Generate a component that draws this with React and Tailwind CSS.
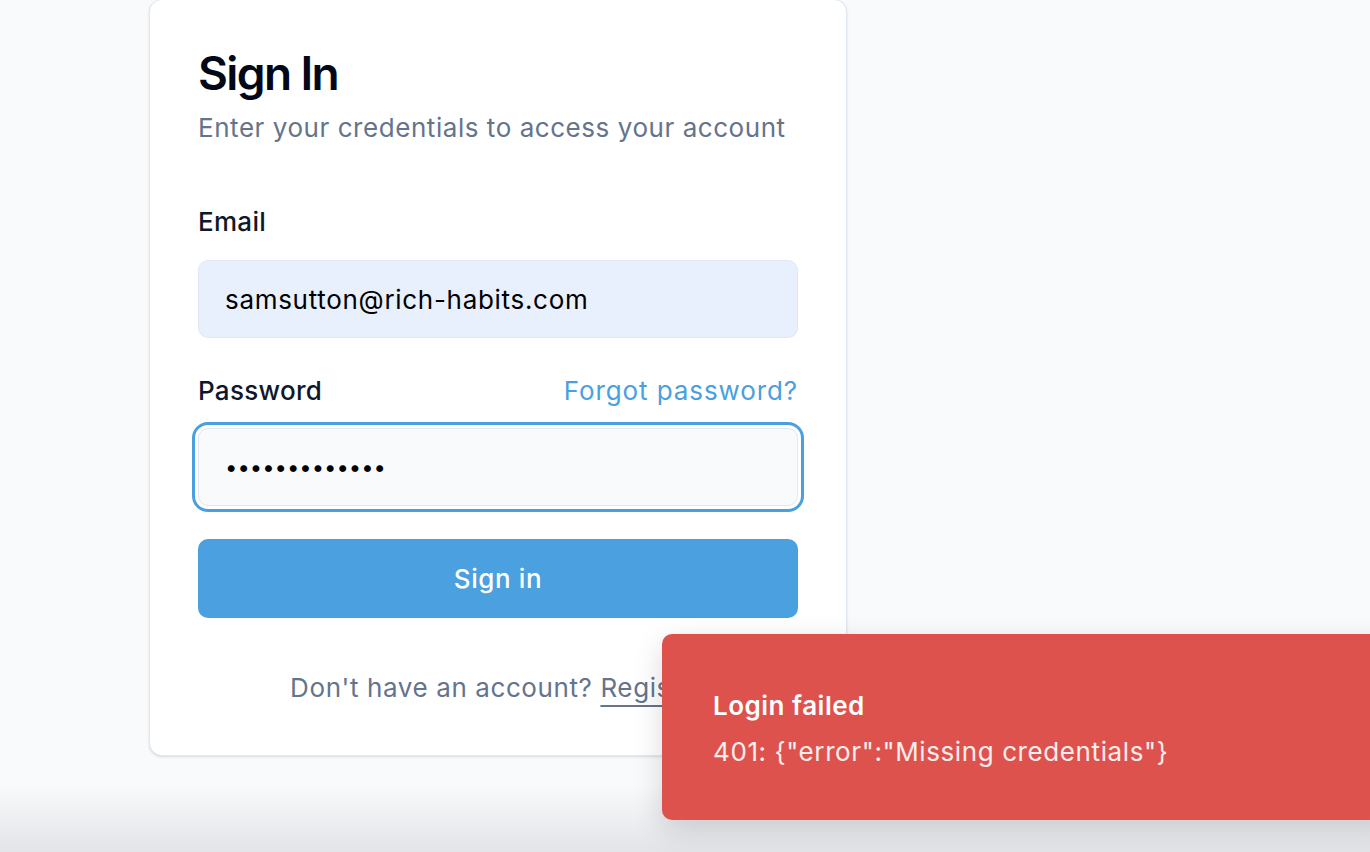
export default function App() {
    return (
        <div
            className="relative h-screen overflow-hidden bg-[linear-gradient(to_bottom,#f8fafc_0px,#f8fafc_785px,#e3e4e7_852px)]"
            style={{ fontFamily: 'Inter, "Noto Sans", sans-serif' }}
        >
            {/* Login card */}
            <div className="ml-[149px] -mt-[1px] w-[698px] rounded-[13px] border border-[#e2e8f0] bg-white px-[48px] pt-[49px] pb-[49px] shadow-sm">
                <h1 className="text-[46px] font-semibold leading-[48px] tracking-[-0.035em] text-[#020817]">Sign In</h1>
                <p className="mt-[13px] text-[26px] leading-[36px] tracking-[0.55px] text-[#64748b]">Enter your credentials to access your account</p>

                <form className="mt-[58px]" onSubmit={(e) => e.preventDefault()}>
                    <label className="block text-[26px] font-medium leading-[36px] tracking-[0.3px] text-[#0f172a]">Email</label>
                    <input
                        type="email"
                        readOnly
                        value="samsutton@rich-habits.com"
                        className="mt-[20px] block h-[78px] w-full rounded-[10px] border border-[#e2e8f0] bg-[#e8f0fe] px-[26px] text-[26px] tracking-[0.7px] text-black outline-none"
                    />

                    <div className="mt-[35px] flex items-center justify-between">
                        <label className="text-[26px] font-medium leading-[36px] tracking-[0.3px] text-[#0f172a]">Password</label>
                        <a href="#" className="text-[26px] leading-[36px] tracking-[0.9px] text-[#4a9fe0]">Forgot password?</a>
                    </div>
                    <input
                        type="password"
                        readOnly
                        value="abcdefghijklm"
                        className="mt-[19px] block h-[78px] w-full rounded-[10px] border border-[#e2e8f0] bg-[#f8fafc] px-[26px] text-[22px] text-black outline-none ring-[3px] ring-[#4a9fe0] ring-offset-[3px] ring-offset-white"
                    />

                    <button
                        type="submit"
                        className="mt-[33px] block h-[79px] w-full rounded-[10px] bg-[#4ba0e0] text-[26px] font-medium tracking-[0.6px] text-white"
                    >
                        Sign in
                    </button>
                </form>

                <p className="mt-[52px] text-center text-[26px] leading-[36px] tracking-[0.6px] text-[#64748b]">
                    Don't have an account?{' '}
                    <a href="#" className="underline decoration-[2px] underline-offset-[8px]">Register</a>
                </p>
            </div>

            {/* Toast */}
            <div className="absolute left-[662px] top-[634px] w-[740px] rounded-[10px] bg-[#dd524c] pl-[51px] pr-6 pt-[54px] pb-[50px] shadow-[0_10px_30px_rgba(0,0,0,0.15)]">
                <div className="text-[26px] font-semibold leading-[36px] tracking-[0.5px] text-white">Login failed</div>
                <div className="mt-[10px] text-[26px] leading-[36px] tracking-[0.6px] text-white/90">401: {'{"error":"Missing credentials"}'}</div>
            </div>
        </div>
    );
}
